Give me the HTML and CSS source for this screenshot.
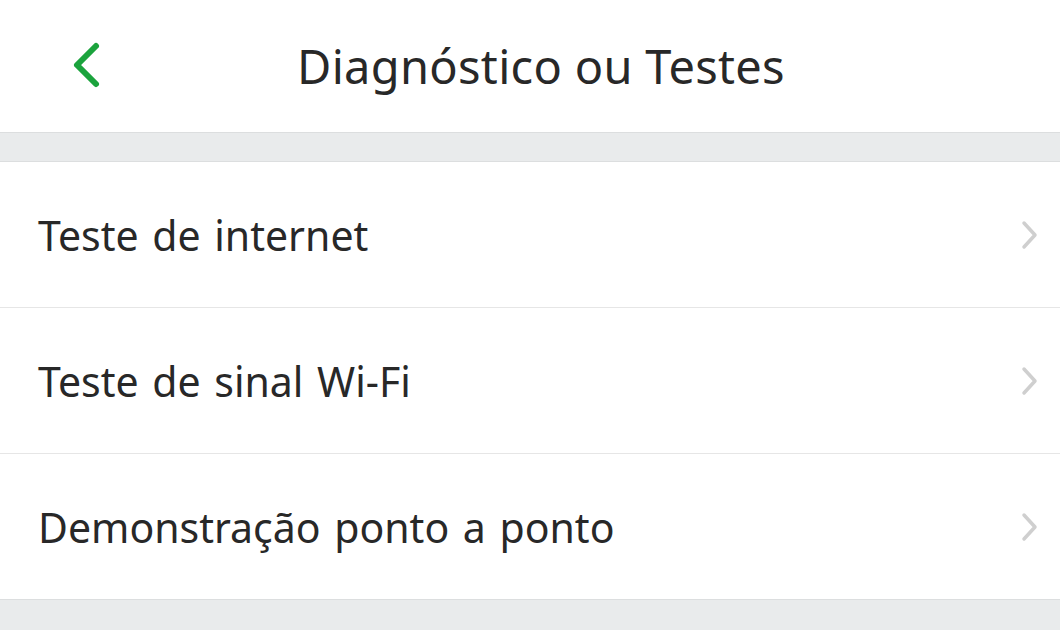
FILE: index.html
```html
<!DOCTYPE html>
<html>
	<head>
		<meta charset="utf-8">
		<title>Diagnóstico ou Testes</title>
		<link rel="stylesheet" href="styles.css">
	</head>
	<body>
		<div class="header">
			<a class="back" href="#">
				<svg width="40" height="56" viewBox="0 0 40 56">
					<path d="M29 8 L10 27 L29 46" fill="none" stroke="#1ba33d" stroke-width="6" stroke-linecap="round" stroke-linejoin="round"/>
				</svg>
			</a>
			<h1 class="title">Diagnóstico ou Testes</h1>
		</div>
		<div class="gap"></div>
		<ul class="list">
			<li class="item">
				<span>Teste de internet</span>
				<svg class="arrow" width="24" height="36" viewBox="0 0 24 36">
					<path d="M6 6 L17 18 L6 30" fill="none" stroke="#cfcfcf" stroke-width="3.5" stroke-linecap="round" stroke-linejoin="round"/>
				</svg>
			</li>
			<li class="item">
				<span>Teste de sinal Wi-Fi</span>
				<svg class="arrow" width="24" height="36" viewBox="0 0 24 36">
					<path d="M6 6 L17 18 L6 30" fill="none" stroke="#cfcfcf" stroke-width="3.5" stroke-linecap="round" stroke-linejoin="round"/>
				</svg>
			</li>
			<li class="item">
				<span>Demonstração ponto a ponto</span>
				<svg class="arrow" width="24" height="36" viewBox="0 0 24 36">
					<path d="M6 6 L17 18 L6 30" fill="none" stroke="#cfcfcf" stroke-width="3.5" stroke-linecap="round" stroke-linejoin="round"/>
				</svg>
			</li>
		</ul>
	</body>
</html>
```
FILE: styles.css
```css
*{
	margin: 0;
	padding: 0;
}
ul{
	list-style: none;
}
a{
	text-decoration: none;
}
body{
	background-color: #e9ebec;
	font-family: "Noto Sans", "Open Sans", sans-serif;
	color: #282828;
}
.header{
	display: flex;
	align-items: center;
	height: 132px;
	padding-left: 67px;
	background-color: #fff;
	border-bottom: 1px solid #dcdedf;
}
.back{
	display: flex;
	width: 40px;
	height: 56px;
}
.title{
	flex: 1;
	padding-right: 85px;
	text-align: center;
	font-size: 47px;
	font-weight: normal;
	letter-spacing: 0.3px;
	color: #282828;
}
.gap{
	height: 28px;
	border-bottom: 1px solid #dcdedf;
}
.list{
	background-color: #fff;
}
.item{
	display: flex;
	align-items: center;
	justify-content: space-between;
	height: 145px;
	padding: 0 18px 0 38px;
	font-size: 41px;
	word-spacing: 3px;
	border-bottom: 1px solid #e6e6e6;
}
.item:last-child{
	border-bottom-color: #dcdedf;
}
```
